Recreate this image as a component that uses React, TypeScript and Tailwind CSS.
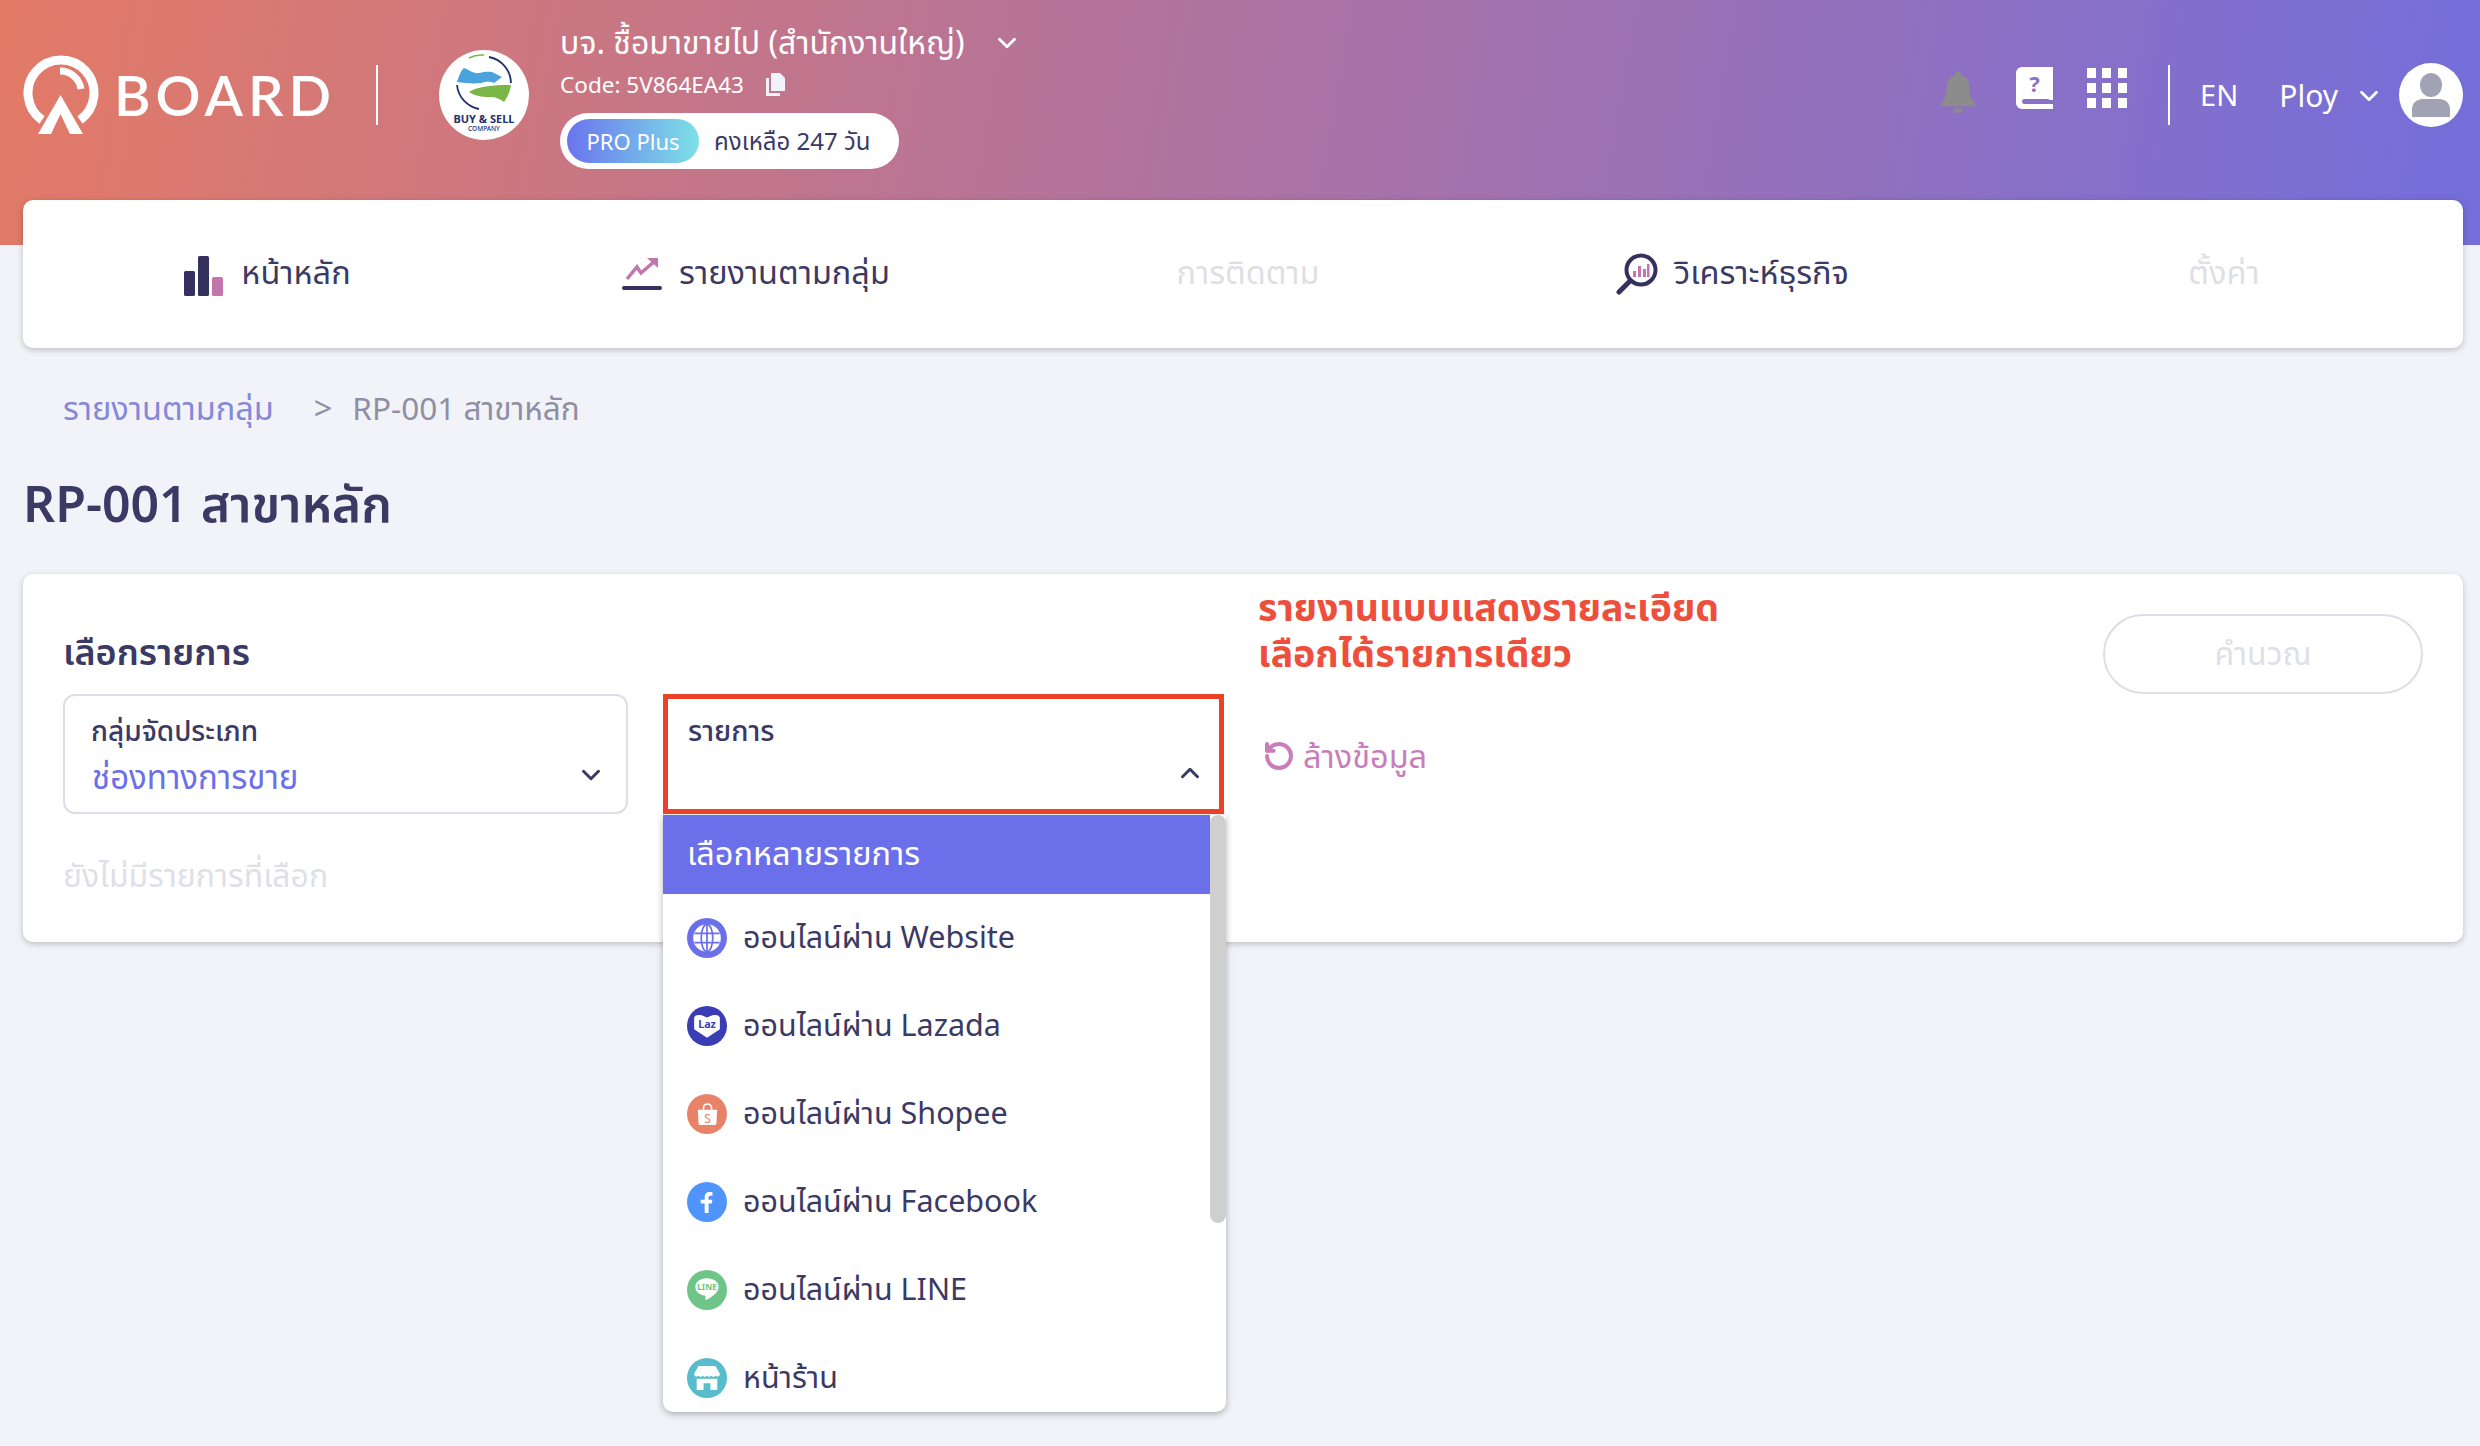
import React from "react";
import { ChevronDown, ChevronUp, RotateCcw } from "lucide-react";

const font = { fontFamily: '"Noto Sans","Noto Sans Thai","Liberation Sans","DejaVu Sans",sans-serif' };

function Logo() {
  return (
    <div className="flex items-center text-white">
      <svg width="76" height="82" viewBox="0 0 76 82" fill="none" className="mr-[15px]">
        <path d="M19 66 A33 33 0 1 1 57 66" stroke="#fff" strokeWidth="9" />
        <path d="M37 17 A21 21 0 0 1 58 35" stroke="#fff" strokeWidth="7" />
        <path d="M37.500 41 L15 80 H28 L37.500 60 L47 80 H60 Z" fill="#fff" />
      </svg>
      <span className="text-[56px] leading-none tracking-[5px] font-['Lato'] font-semibold">BOARD</span>
    </div>
  );
}

function CompanyLogo() {
  return (
    <div className="w-[90px] h-[90px] rounded-full bg-white shrink-0">
      <svg width="90" height="90" viewBox="0 0 90 90">
        <path d="M50 7 A27 27 0 0 1 72 33" fill="none" stroke="#22306e" strokeWidth="1.800" />
        <path d="M40 59 A27 27 0 0 1 18 35" fill="none" stroke="#22306e" strokeWidth="1.800" />
        <path d="M30 8 A27 27 0 0 1 45 5" fill="none" stroke="#7ab648" strokeWidth="1.500" />
        <path d="M18 32 C20 26 22 20 25 18 C31 20 34 24 40 23 C46 22 51 21 55 23 L63 27 L55 33 C50 31 46 32 42 33 C34 34 26 33 18 32 Z" fill="#4aa3dc" />
        <path d="M30 42 C36 38 40 38 44 37 C50 36 57 35 62 35 L72 35 C71 42 68 48 65 52 C61 49 57 47 52 47 C46 47 38 47 30 42 Z" fill="#7ab648" />
        <text x="45" y="73" textAnchor="middle" fontSize="11" fontWeight="700" fill="#22306e">BUY &amp; SELL</text>
        <text x="45" y="81" textAnchor="middle" fontSize="6.500" fontWeight="500" fill="#22306e">COMPANY</text>
      </svg>
    </div>
  );
}

function Header() {
  return (
    <header className="h-[245px] bg-[linear-gradient(100deg,#e37a66_0%,#a872a8_55%,#736edb_100%)] pl-[23px] pr-[17px] flex items-start text-white">
      <div className="flex items-center h-[190px]">
        <Logo />
        <div className="w-[2px] h-[60px] bg-white ml-[40px] mr-[61px]" />
        <CompanyLogo />
      </div>
      <div className="ml-[31px] pt-[20px]">
        <div className="flex items-center h-[44px] text-[32px] leading-none">
          <span>บจ. ชื้อมาขายไป (สำนักงานใหญ่)</span>
          <ChevronDown className="ml-[27px] mt-[2px]" size={30} strokeWidth={2.2} />
        </div>
        <div className="flex items-center h-[40px] mt-[1px] text-[22.500px] leading-none">
          <span>Code: 5V864EA43</span>
          <svg className="ml-[20px]" width="22" height="26" viewBox="0 0 22 26">
            <path d="M7 1h9l5 5v13H7z" fill="#f2f3f8" />
            <path d="M2 6h3v15h11v3H2z" fill="#f2f3f8" />
          </svg>
        </div>
        <div className="mt-[8px] w-[339px] h-[56px] bg-white rounded-full flex items-center pl-[7px]">
          <span className="w-[132px] h-[44px] rounded-full bg-[linear-gradient(90deg,#6a75ee,#7ce0e6)] text-[22px] flex items-center justify-center">PRO Plus</span>
          <span className="ml-[15px] text-[24px] text-[#3a3a64]">คงเหลือ 247 วัน</span>
        </div>
      </div>
      <div className="ml-auto h-[190px] flex items-center">
        <svg width="36" height="42" viewBox="0 0 24 28" fill="#8c8c8c" className="-mt-[6px]">
          <path d="M12 0a1.8 1.8 0 0 1 1.8 1.8v.9C17.5 3.6 19.500 6.500 19.500 10c0 6 1 8.500 3.800 11.500.7.800.3 2-.8 2H1.500c-1.100 0-1.500-1.200-.8-2C3.500 18.500 4.500 16 4.500 10c0-3.500 2-6.400 5.700-7.300v-.9A1.800 1.800 0 0 1 12 0z" />
          <path d="M8.500 25h7a3.500 3 0 0 1-7 0z" />
        </svg>
        <svg className="ml-[40px] -mt-[15px]" width="37" height="42" viewBox="0 0 37 42">
          <path d="M6 0H37V33H33V37H37V42H6A6 6 0 0 1 0 36V6A6 6 0 0 1 6 0Z" fill="#fff" />
          <rect x="6" y="32" width="28" height="5" rx="2.500" fill="#8a70c6" />
          <text x="18.500" y="25" textAnchor="middle" fontSize="22" fontWeight="700" fill="#8a70c6">?</text>
        </svg>
        <div className="ml-[34px] -mt-[15px] grid grid-cols-3 gap-x-[6px] gap-y-[5px] w-[40px]">
          {Array.from({ length: 9 }).map((_, i) => (
            <div key={i} className="w-[9px] h-[10px] bg-white" />
          ))}
        </div>
        <div className="w-[2px] h-[60px] bg-white ml-[41px] mr-[30px]" />
        <span className="text-[29px]">EN</span>
        <span className="text-[30px] ml-[41px]">Ploy</span>
        <ChevronDown className="ml-[16px] mt-[2px]" size={30} strokeWidth={2.2} />
        <div className="ml-[15px] w-[64px] h-[64px] rounded-full bg-white flex items-center justify-center">
          <svg width="40" height="44" viewBox="0 0 40 44" fill="#a1a3b5">
            <ellipse cx="20" cy="12" rx="11" ry="12" />
            <path d="M1 44V36C1 30 6 26 12 26H28C34 26 39 30 39 36V44Z" />
          </svg>
        </div>
      </div>
    </header>
  );
}

function Nav() {
  const c = "flex items-center justify-center text-[32.500px] pb-[4px]";
  return (
    <nav className="ml-[23px] mr-[17px] -mt-[45px] h-[148px] rounded-[10px] bg-white shadow-[0_2px_6px_rgba(0,0,0,0.22)] grid grid-cols-5 text-[#3a3a64] relative">
      <div className={c}>
        <svg width="40" height="40" viewBox="0 0 40 40" className="mr-[18px] mt-[8px]">
          <rect x="1" y="15" width="11" height="25" rx="1.500" fill="#36305f" />
          <rect x="15" y="0" width="11" height="40" rx="1.500" fill="#36305f" />
          <rect x="29" y="21" width="11" height="19" rx="1.500" fill="#c176ac" />
        </svg>
        หน้าหลัก
      </div>
      <div className={c + " pl-[2px]"}>
        <svg width="40" height="36" viewBox="0 0 40 36" fill="none" className="mr-[17px] mt-[4px]">
          <path d="M5 23 L15 11 L19 17 L33 5" stroke="#c176ac" strokeWidth="3.500" />
          <path d="M25 2 H36 V12 Z" fill="#c176ac" />
          <rect x="0" y="30" width="40" height="4" rx="2" fill="#36305f" />
        </svg>
        รายงานตามกลุ่ม
      </div>
      <div className={c + " pl-[10px] text-[#dfdfe3]"}>การติดตาม</div>
      <div className={c + " pl-[3px]"}>
        <svg width="42" height="42" viewBox="0 0 42 42" fill="none" className="mr-[16px] mt-[4px]">
          <circle cx="25" cy="17" r="14.500" stroke="#36305f" strokeWidth="4" />
          <path d="M14 28 L3 39" stroke="#36305f" strokeWidth="5" strokeLinecap="round" />
          <rect x="17" y="18" width="3" height="6" fill="#c176ac" />
          <rect x="22" y="13" width="3" height="11" fill="#c176ac" />
          <rect x="27" y="16" width="3" height="8" fill="#c176ac" />
          <rect x="31" y="11" width="2.500" height="13" fill="#c176ac" />
        </svg>
        วิเคราะห์ธุรกิจ
      </div>
      <div className={c + " pl-[10px] text-[#dfdfe3]"}>ตั้งค่า</div>
    </nav>
  );
}

function Globe() {
  return (
    <svg width="30" height="30" viewBox="0 0 26 26" fill="none">
      <circle cx="13" cy="13" r="12" fill="#fff" />
      <ellipse cx="13" cy="13" rx="5" ry="12" stroke="#6b6fea" strokeWidth="1.500" />
      <path d="M2 9H24M2 17H24M13 1V25" stroke="#6b6fea" strokeWidth="1.500" />
    </svg>
  );
}
function Laz() {
  return (
    <svg width="30" height="28" viewBox="0 0 28 26">
      <path d="M14 24 L2 16 V6 C2 3 5 2 9 3 L14 5 L19 3 C23 2 26 3 26 6 V16 Z" fill="#fff" />
      <text x="14" y="15" textAnchor="middle" fontSize="10" fontWeight="700" fill="#3b3db5">Laz</text>
    </svg>
  );
}
function Shopee() {
  return (
    <svg width="21" height="25" viewBox="0 0 26 30">
      <path d="M8 9V7a5 5 0 0 1 10 0v2" fill="none" stroke="#fff" strokeWidth="2" />
      <path d="M1 9H25L24 26a2 2 0 0 1-2 2H4a2 2 0 0 1-2-2Z" fill="#fff" />
      <text x="13" y="25" textAnchor="middle" fontSize="15" fill="#e8836a">S</text>
    </svg>
  );
}
function Fb() {
  return (
    <svg width="14" height="24" viewBox="0 0 18 28" fill="#fff">
      <path d="M6 28V16H1V11H6V7C6 3 8.500 1 12 1H16V6H13C11.500 6 11 7 11 8V11H16L15 16H11V28Z" />
    </svg>
  );
}
function Line() {
  return (
    <svg width="30" height="28" viewBox="0 0 38 36">
      <path d="M19 3C10 3 4 8 4 14C4 20 10 25 17 25L17 31C22 29 34 22 34 14C34 8 28 3 19 3Z" fill="#fff" />
      <text x="19" y="18" textAnchor="middle" fontSize="11" fontWeight="700" fill="#6fc587">LINE</text>
    </svg>
  );
}
function Store() {
  return (
    <svg width="26" height="24" viewBox="0 0 30 28" fill="#fff">
      <path d="M5 0H25L30 9C30 13 26 13 25 11C24 13 21 13 20 11C19 13 16 13 15 11C14 13 11 13 10 11C9 13 6 13 5 11C4 13 0 13 0 9Z" />
      <path d="M3 15H27V28H19V20H11V28H3Z" />
    </svg>
  );
}

const items: [string, string, React.ReactNode][] = [
  ["ออนไลน์ผ่าน Website", "bg-[#6b6fea]", <Globe />],
  ["ออนไลน์ผ่าน Lazada", "bg-[#3b3db5]", <Laz />],
  ["ออนไลน์ผ่าน Shopee", "bg-[#e8836a]", <Shopee />],
  ["ออนไลน์ผ่าน Facebook", "bg-[#4f94fa]", <Fb />],
  ["ออนไลน์ผ่าน LINE", "bg-[#6fc587]", <Line />],
  ["หน้าร้าน", "bg-[#57bccb]", <Store />],
];

function Dropdown() {
  return (
    <div className="absolute left-0 top-[241px] w-[563px] h-[597px] bg-white rounded-b-[10px] shadow-[0_2px_7px_rgba(0,0,0,0.3)] overflow-hidden z-10">
      <div className="h-[79px] w-[547px] bg-[#6b6fea] text-white text-[32.500px] flex items-center pl-[24px] pb-[2px]">เลือกหลายรายการ</div>
      {items.map(([t, bg, icon]) => (
        <div key={t} className="h-[88px] flex items-center pl-[24px] text-[30.500px] text-[#3a3a64]">
          <div className={`w-[40px] h-[40px] rounded-full flex items-center justify-center overflow-hidden ${bg}`}>
            {icon}
          </div>
          <span className="ml-[16px] -mt-[2px]">{t}</span>
        </div>
      ))}
      <div className="absolute right-0 top-0 w-[16px] h-[408px] bg-[#cfcfcf] rounded-[8px]" />
    </div>
  );
}

function Card() {
  return (
    <section className="ml-[23px] mr-[17px] mt-[38px] h-[368px] rounded-[10px] bg-white shadow-[0_2px_6px_rgba(0,0,0,0.22)] pl-[40px] pr-[40px] flex">
      <div className="w-[565px] shrink-0">
        <h2 className="mt-[55px] h-[46px] text-[36px] leading-[46px] font-semibold text-[#3a3a64]">เลือกรายการ</h2>
        <div className="mt-[19px] h-[120px] rounded-[12px] border-2 border-[#dddde8] pl-[26px] pr-[20px] pt-[16px] relative">
          <div className="text-[28px] leading-[36px] font-medium text-[#3a3a64]">กลุ่มจัดประเภท</div>
          <div className="flex items-center justify-between mt-[8px]">
            <span className="text-[33px] leading-[42px] text-[#6b6fea] pl-[1px]">ช่องทางการขาย</span>
            <ChevronDown size={30} strokeWidth={2.4} className="text-[#3a3a64] mb-[4px]" />
          </div>
        </div>
        <div className="mt-[40px] text-[32px] leading-[42px] text-[#dfdfe8]">ยังไม่มีรายการที่เลือก</div>
      </div>
      <div className="ml-[35px] w-[561px] relative pt-[120px] shrink-0">
        <div className="h-[120px] border-[5px] border-[#ea4128] pl-[20px] pr-[14px] pt-[13px] bg-white relative z-20">
          <div className="text-[28.500px] leading-[36px] font-medium text-[#3a3a64]">รายการ</div>
          <div className="flex justify-end mt-[10px]">
            <ChevronUp size={30} strokeWidth={2.4} className="text-[#3a3a64]" />
          </div>
        </div>
        <Dropdown />
      </div>
      <div className="ml-[34px] pt-[10px] shrink-0">
        <div className="text-[37.500px] leading-[46px] font-bold text-[#ee4f3c]">
          รายงานแบบแสดงรายละเอียด
          <br />
          เลือกได้รายการเดียว
        </div>
        <div className="mt-[56px] flex items-center text-[#c97dbb] text-[32.500px] pl-[5px]">
          <RotateCcw size={32} strokeWidth={3} className="mr-[8px]" />
          ล้างข้อมูล
        </div>
      </div>
      <div className="ml-auto pt-[40px]">
        <div className="w-[320px] h-[80px] rounded-full border-2 border-[#dddde8] text-[#dfdfe8] text-[32px] flex items-center justify-center pb-[2px]">คำนวณ</div>
      </div>
    </section>
  );
}

export default function App() {
  return (
    <div className="w-[2480px] h-[1446px] bg-[#f2f3f8] overflow-hidden" style={font}>
      <Header />
      <Nav />
      <div className="pl-[63px] mt-[39px] h-[42px] flex items-center text-[32.500px]">
        <span className="text-[#8488d8]">รายงานตามกลุ่ม</span>
        <span className="ml-[40px] text-[#8f8fa3]">&gt;</span>
        <span className="ml-[20px] text-[#8f8fa3] text-[31.500px]">RP-001 สาขาหลัก</span>
      </div>
      <h1 className="pl-[23px] mt-[41px] h-[66px] text-[50px] leading-[66px] font-semibold text-[#3a3a64]">RP-001 สาขาหลัก</h1>
      <Card />
    </div>
  );
}
